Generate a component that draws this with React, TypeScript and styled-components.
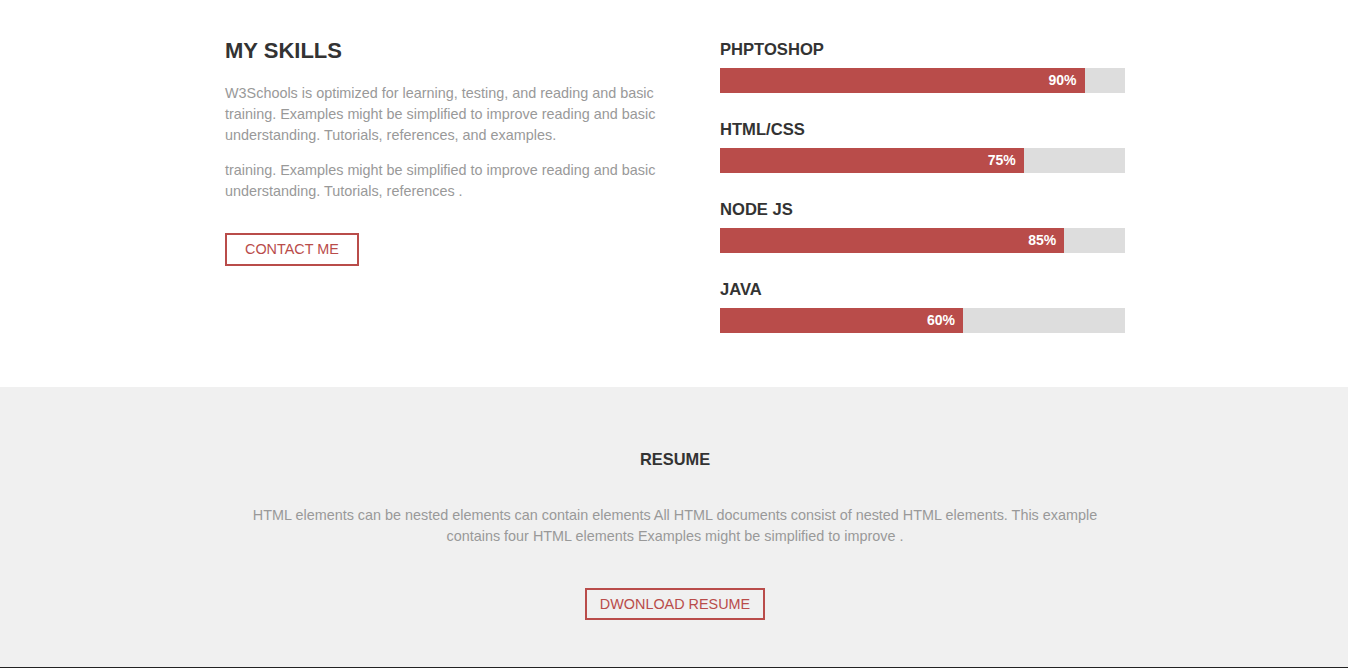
import styled, { createGlobalStyle } from 'styled-components'

const GlobalStyle = createGlobalStyle`
	* { box-sizing: border-box; }
	html, body { margin: 0; padding: 0; background: #ffffff; }
	body {
		font-family: "Liberation Sans", Arial, sans-serif;
		height: 668px;
		overflow: hidden;
	}
`

const red = '#b94c4a'

const Page = styled.div`
	display: flex;
	flex-direction: column;
	height: 668px;
`

const SkillsSection = styled.section`
	padding: 38px 0 54px;
	background: #ffffff;
`

const Container = styled.div`
	width: 902px;
	margin: 0 auto;
	padding-left: 2px;
`

const SkillsGrid = styled(Container)`
	display: grid;
	grid-template-columns: 435px 405px;
	column-gap: 60px;
`

const Heading = styled.h2`
	margin: 0 0 19px;
	font-size: 22px;
	line-height: 26px;
	font-weight: 700;
	color: #333333;
`

const Text = styled.p<{ center?: boolean }>`
	margin: 0 0 14px;
	font-size: 14.4px;
	line-height: 21px;
	color: #999999;
	text-align: ${(p) => (p.center ? 'center' : 'left')};
`

const OutlineButton = styled.button<{ top: number; side: number; tall: number }>`
	display: inline-block;
	margin-top: ${(p) => p.top}px;
	padding: 0 ${(p) => p.side}px;
	height: ${(p) => p.tall}px;
	border: 2px solid ${red};
	background: transparent;
	color: ${red};
	font-family: "Liberation Sans", Arial, sans-serif;
	font-size: 14.4px;
	line-height: ${(p) => p.tall - 4}px;
	text-transform: uppercase;
	cursor: pointer;
`

const SkillList = styled.div`
	display: flex;
	flex-direction: column;
	gap: 28px;
	padding-top: 3px;
`

const Skill = styled.div`
	display: flex;
	flex-direction: column;
	gap: 9px;
`

const SkillName = styled.div`
	font-size: 16.6px;
	line-height: 18px;
	font-weight: 700;
	color: #333333;
`

const Track = styled.div`
	height: 25px;
	background: #dddddd;
`

const Fill = styled.div`
	height: 100%;
	background: ${red};
	color: #ffffff;
	font-size: 14px;
	font-weight: 700;
	line-height: 25px;
	text-align: right;
	padding-right: 8px;
`

const ResumeSection = styled.section`
	flex: 1;
	background: #f0f0f0;
	padding-top: 63px;
	text-align: center;
	border-bottom: 1px solid #222222;
`

const ResumeTitle = styled.h3`
	margin: 0 0 37px;
	font-size: 16.4px;
	line-height: 18px;
	font-weight: 700;
	color: #333333;
`

const skills = [
	{ name: 'PHPTOSHOP', value: 90 },
	{ name: 'HTML/CSS', value: 75 },
	{ name: 'NODE JS', value: 85 },
	{ name: 'JAVA', value: 60 },
]

export default function App() {
	return (
		<>
			<GlobalStyle />
			<Page>
				<SkillsSection>
					<SkillsGrid>
						<div>
							<Heading>MY SKILLS</Heading>
							<Text>
								W3Schools is optimized for learning, testing, and reading and basic training. Examples might be
								simplified to improve reading and basic understanding. Tutorials, references, and examples.
							</Text>
							<Text>
								training. Examples might be simplified to improve reading and basic understanding. Tutorials,
								references .
							</Text>
							<OutlineButton top={17} side={18} tall={33}>
								Contact me
							</OutlineButton>
						</div>
						<SkillList>
							{skills.map((s) => (
								<Skill key={s.name}>
									<SkillName>{s.name}</SkillName>
									<Track>
										<Fill style={{ width: `${s.value}%` }}>{s.value}%</Fill>
									</Track>
								</Skill>
							))}
						</SkillList>
					</SkillsGrid>
				</SkillsSection>
				<ResumeSection>
					<Container>
						<ResumeTitle>RESUME</ResumeTitle>
						<Text center>
							HTML elements can be nested elements can contain elements All HTML documents consist of nested HTML
							elements. This example contains four HTML elements Examples might be simplified to improve .
						</Text>
						<OutlineButton top={27} side={13} tall={32}>
							Dwonload resume
						</OutlineButton>
					</Container>
				</ResumeSection>
			</Page>
		</>
	)
}
